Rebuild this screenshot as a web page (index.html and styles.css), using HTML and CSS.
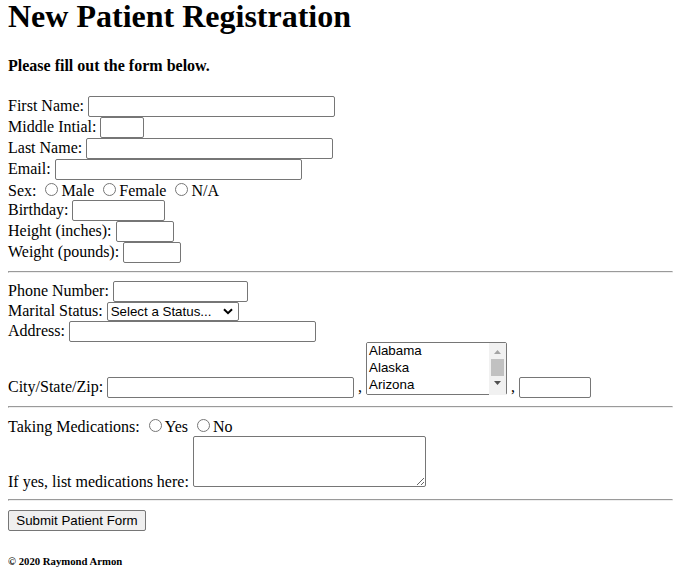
FILE: index.html
```html
<!DOCTYPE html>
<html lang="en">
<head>
<meta charset="utf-8">
<title>New Patient Registration</title>
<link rel="stylesheet" href="styles.css">
</head>
<body class="page">
<h1 class="title">New Patient Registration</h1>
<h4 class="intro">Please fill out the form below.</h4>
<form class="reg-form">
First Name: <input type="text" class="field field-long"><br>
Middle Intial: <input type="text" class="field field-mi"><br>
Last Name: <input type="text" class="field field-long"><br>
Email: <input type="text" class="field field-long"><br>
Sex: <input type="radio" name="sex" class="radio">Male <input type="radio" name="sex" class="radio">Female <input type="radio" name="sex" class="radio">N/A<br>
Birthday: <input type="text" class="field field-bday"><br>
Height (inches): <input type="text" class="field field-num"><br>
Weight (pounds): <input type="text" class="field field-num"><br>
<hr class="rule">
Phone Number: <input type="text" class="field field-phone"><br>
Marital Status: <span class="status-wrap"><select class="status"><option>Select a Status...</option><option>Single</option><option>Married</option></select><svg class="chevron" width="10" height="7" viewBox="0 0 10 7"><path d="M1 1.2 L5 5.2 L9 1.2" fill="none" stroke="#000" stroke-width="2"/></svg></span><br>
Address: <input type="text" class="field field-long"><br>
City/State/Zip: <input type="text" class="field field-long"> , <span class="states-wrap"><select class="states" size="3"><option>Alabama</option><option>Alaska</option><option>Arizona</option><option>Arkansas</option><option>California</option><option>Colorado</option><option>Connecticut</option></select><span class="fake-scroll"><svg class="arrow" width="7" height="4" viewBox="0 0 7 4"><path d="M0 4 L3.5 0 L7 4 Z" fill="#a3a3a3"/></svg><span class="thumb"></span><svg class="arrow" width="7" height="4" viewBox="0 0 7 4"><path d="M0 0 L3.5 4 L7 0 Z" fill="#505050"/></svg></span></span> , <input type="text" class="field field-zip"><br>
<hr class="rule">
Taking Medications: <input type="radio" name="meds" class="radio">Yes <input type="radio" name="meds" class="radio">No<br>
If yes, list medications here: <textarea class="meds"></textarea>
<hr class="rule rule-last">
<input type="submit" class="submit" value="Submit Patient Form">
</form>
<footer class="foot"><h6 class="copy">© 2020 Raymond Armon</h6></footer>
</body>
</html>
```
FILE: styles.css
```css
.page {
  margin: 0 0 8px 8px;
  font-family: "Liberation Serif", "Times New Roman", serif;
  font-size: 16px;
  color: #000;
  background: #fff;
}
.title {
  font-size: 32px;
  line-height: 32px;
  margin: 0 0 25px;
  white-space: nowrap;
}
.intro {
  font-size: 16px;
  margin: 0 0 21px;
}
.reg-form {
  margin: 0;
}
.field {
  font-family: "Liberation Sans", Arial, sans-serif;
  font-size: 13.333px;
  box-sizing: border-box;
  height: 21px;
  padding: 1px 2px;
  border: 1px solid #767676;
  border-radius: 2px;
  margin: 0;
}
.field-long { width: 247px; }
.field-mi { width: 44px; }
.field-bday { width: 93px; }
.field-num { width: 58px; }
.field-phone { width: 135px; }
.field-zip { width: 72px; }
.radio {
  margin: 3px 3px 0 5px;
}
.status-wrap {
  position: relative;
  display: inline-block;
}
.status {
  -webkit-appearance: none;
  appearance: none;
  font-family: "Liberation Sans", Arial, sans-serif;
  font-size: 13.333px;
  color: #000;
  box-sizing: border-box;
  width: 132px;
  height: 19px;
  margin: 0;
  padding: 0 0 0 3px;
  border: 1px solid #767676;
  border-radius: 2px;
  background: #fff;
}
.chevron {
  position: absolute;
  right: 6px;
  top: 50%;
  margin-top: -4px;
  pointer-events: none;
}
.states-wrap {
  position: relative;
  display: inline-block;
}
.states {
  font-family: "Liberation Sans", Arial, sans-serif;
  font-size: 13.333px;
  color: #000;
  box-sizing: border-box;
  width: 141px;
  height: 53px;
  margin: 0;
  border: 1px solid #767676;
  border-radius: 2px;
  padding: 0;
}
.fake-scroll {
  position: absolute;
  top: 1px;
  right: 1px;
  bottom: 1px;
  width: 17px;
  background: #f1f1f1;
  display: flex;
  flex-direction: column;
  align-items: center;
  pointer-events: none;
}
.arrow {
  flex: none;
  margin: 5px 0;
}
.arrow:first-child {
  margin-top: 7px;
}
.thumb {
  flex: none;
  width: 13px;
  height: 17px;
  background: #c1c1c1;
}
.meds {
  width: 233px;
  height: 51px;
  box-sizing: border-box;
  border: 1px solid #767676;
  border-radius: 2px;
  vertical-align: baseline;
}
.rule {
  margin: 8px 0;
}
.rule-last {
  margin-bottom: 9px;
}
.submit {
  font-family: "Liberation Sans", Arial, sans-serif;
  font-size: 13.333px;
  color: #000;
  box-sizing: border-box;
  width: 138px;
  height: 21px;
  padding: 1px 6px;
  border: 1px solid #767676;
  border-radius: 2px;
  background: #efefef;
}
.copy {
  font-size: 10.72px;
  margin: 24px 0 0;
}
```
